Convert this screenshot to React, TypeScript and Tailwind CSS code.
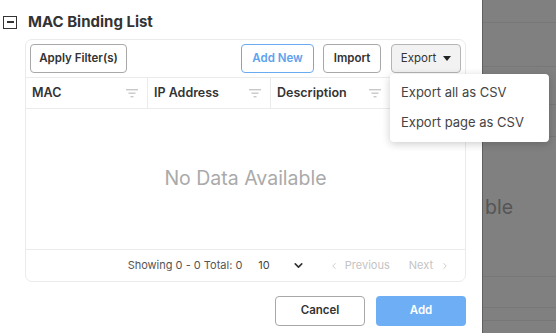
import { ChevronDown, ChevronLeft, ChevronRight } from "lucide-react";

const COLUMNS = [
  { label: "MAC", width: "w-[122px]" },
  { label: "IP Address", width: "w-[123px]" },
  { label: "Description", width: "w-[120px]" },
];

function FilterIcon() {
  return (
    <svg width="12" height="9" viewBox="0 0 12 9" className="shrink-0">
      <rect x="0" y="0" width="12" height="1.4" fill="#c8c8c8" />
      <rect x="2.5" y="3.5" width="7" height="1.4" fill="#c8c8c8" />
      <rect x="4.5" y="7" width="3" height="1.4" fill="#c8c8c8" />
    </svg>
  );
}

export default function App() {
  return (
    <div className="w-[556px] h-[333px] flex overflow-hidden relative font-['Inter',sans-serif]">
      {/* drawer */}
      <div className="w-[482px] h-full bg-white flex flex-col pl-[3px] pr-[16px] pt-[14px]">
        <div className="flex items-center gap-[11px] h-[16px]">
          <div className="w-[14px] h-[13px] border-[1.5px] border-[#333] flex items-center justify-center">
            <div className="w-[7px] h-[1.5px] bg-[#333]" />
          </div>
          <h2 className="text-[15px] font-bold text-[#333]">MAC Binding List</h2>
        </div>

        <div className="ml-[22px] mt-[9px] border border-[#ebebeb] rounded-[7px] flex flex-col">
          <div className="flex items-center px-[4px] pt-[4px] pb-[4px] border-b border-[#ebebeb]">
            <button className="h-[29px] w-[97px] border border-[#a8a8a8] rounded-[4px] text-[11.5px] font-semibold text-[#333]">
              Apply Filter(s)
            </button>
            <div className="flex-1" />
            <button className="h-[29px] w-[73px] border border-[#6aaaf0] rounded-[4px] text-[11.5px] font-semibold text-[#5ea2ee]">
              Add New
            </button>
            <button className="ml-[9px] h-[29px] w-[58px] border border-[#a8a8a8] rounded-[4px] text-[11.5px] font-semibold text-[#333]">
              Import
            </button>
            <button className="ml-[10px] h-[29px] w-[70px] border border-[#b5b5b5] bg-[#f2f2f2] rounded-[4px] text-[11.5px] text-[#333] flex items-center justify-center gap-[7px]">
              Export
              <svg width="8" height="5" viewBox="0 0 8 5">
                <path d="M0 0h8L4 5z" fill="#222" />
              </svg>
            </button>
          </div>

          <div className="flex h-[31px] border-b border-[#ebebeb]">
            {COLUMNS.map((c) => (
              <div
                key={c.label}
                className={`${c.width} flex items-center justify-between pl-[6px] pr-[9px] border-r border-[#ebebeb] text-[12.5px] font-semibold text-[#333]`}
              >
                {c.label}
                <FilterIcon />
              </div>
            ))}
          </div>

          <div className="h-[140px] flex items-center justify-center text-[19.5px] text-[#aaa]">
            No Data Available
          </div>

          <div className="h-[32px] border-t border-[#ebebeb] flex items-center justify-end pr-[15px] text-[11px]">
            <span className="text-[#555]">Showing 0 - 0 Total: 0</span>
            <span className="ml-[16px] text-[#444]">10</span>
            <ChevronDown size={13} strokeWidth={3} className="ml-[22px] text-[#333]" />
            <span className="ml-[24px] flex items-center gap-[6px] text-[#c4c4c4]">
              <ChevronLeft size={10} strokeWidth={2} />
              Previous
            </span>
            <span className="ml-[19px] flex items-center gap-[7px] text-[#c4c4c4]">
              Next
              <ChevronRight size={10} strokeWidth={2} />
            </span>
          </div>
        </div>

        <div className="flex justify-end gap-[11px] mt-[14px]">
          <button className="h-[30px] w-[90px] border border-[#a8a8a8] rounded-[4px] text-[11.5px] font-semibold text-[#333]">
            Cancel
          </button>
          <button className="h-[30px] w-[90px] bg-[#6eaef4] rounded-[4px] text-[11.5px] font-semibold text-white">
            Add
          </button>
        </div>
      </div>

      {/* page behind the overlay */}
      <div className="flex-1 h-full bg-[#808080] border-l border-[#5f5f5f] flex flex-col">
        <div className="h-[23px] border-b border-[#777]" />
        <div className="h-[44px] border-b border-[#777]" />
        <div className="h-[38px] border-b border-[#777]" />
        <div className="h-[32px] border-b border-[#777]" />
        <div className="h-[140px] border-b border-[#777] flex items-center pl-[2px] pt-[3px] text-[19.5px] text-[#555]">
          ble
        </div>
        <div className="h-[31px] border-b border-[#777]" />
        <div className="h-[13px] border-b border-[#777]" />
      </div>

      {/* export menu */}
      <div className="absolute left-[390px] top-[74px] w-[159px] h-[68px] bg-white rounded-[4px] shadow-[0_2px_8px_rgba(0,0,0,0.2)] flex flex-col justify-center py-[4px] text-[13px] text-[#444]">
        <div className="h-[30px] flex items-center px-[11px]">Export all as CSV</div>
        <div className="h-[30px] flex items-center px-[11px]">Export page as CSV</div>
      </div>
    </div>
  );
}
